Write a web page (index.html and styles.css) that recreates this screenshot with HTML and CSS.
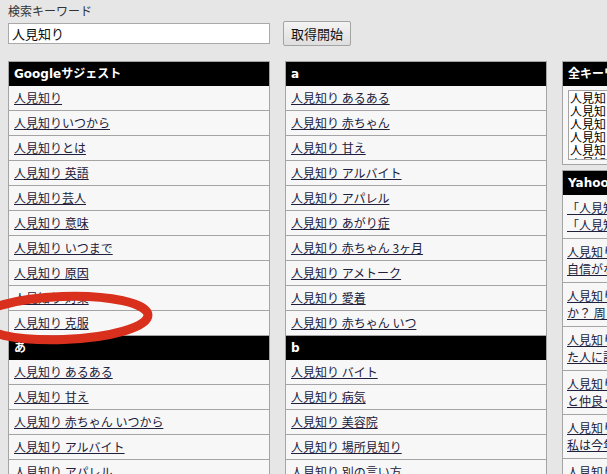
FILE: index.html
```
<!DOCTYPE html>
<html lang="ja">
  <head>
    <meta charset="UTF-8" />
    <meta name="viewport" content="width=device-width, initial-scale=1.0" />
    <title>キーワード取得</title>
    <link rel="stylesheet" href="styles.css">
  </head>
  <body>
    <div class="search">
      <div class="search-label">検索キーワード</div>
      <div class="search-row">
        <input class="search-input" type="text" value="人見知り" />
        <button class="search-btn" type="button">取得開始</button>
      </div>
    </div>

    <div class="columns">
      <div class="col">
        <div class="col-head">Googleサジェスト</div>
        <div class="col-item"><a href="#">人見知り</a></div>
        <div class="col-item"><a href="#">人見知りいつから</a></div>
        <div class="col-item"><a href="#">人見知りとは</a></div>
        <div class="col-item"><a href="#">人見知り 英語</a></div>
        <div class="col-item"><a href="#">人見知り芸人</a></div>
        <div class="col-item"><a href="#">人見知り 意味</a></div>
        <div class="col-item"><a href="#">人見知り いつまで</a></div>
        <div class="col-item"><a href="#">人見知り 原因</a></div>
        <div class="col-item"><a href="#">人見知り 対策</a></div>
        <div class="col-item"><a href="#">人見知り 克服</a></div>
        <div class="col-head">あ</div>
        <div class="col-item"><a href="#">人見知り あるある</a></div>
        <div class="col-item"><a href="#">人見知り 甘え</a></div>
        <div class="col-item"><a href="#">人見知り 赤ちゃん いつから</a></div>
        <div class="col-item"><a href="#">人見知り アルバイト</a></div>
        <div class="col-item"><a href="#">人見知り アパレル</a></div>
      </div>

      <div class="col">
        <div class="col-head">a</div>
        <div class="col-item"><a href="#">人見知り あるある</a></div>
        <div class="col-item"><a href="#">人見知り 赤ちゃん</a></div>
        <div class="col-item"><a href="#">人見知り 甘え</a></div>
        <div class="col-item"><a href="#">人見知り アルバイト</a></div>
        <div class="col-item"><a href="#">人見知り アパレル</a></div>
        <div class="col-item"><a href="#">人見知り あがり症</a></div>
        <div class="col-item"><a href="#">人見知り 赤ちゃん 3ヶ月</a></div>
        <div class="col-item"><a href="#">人見知り アメトーク</a></div>
        <div class="col-item"><a href="#">人見知り 愛着</a></div>
        <div class="col-item"><a href="#">人見知り 赤ちゃん いつ</a></div>
        <div class="col-head">b</div>
        <div class="col-item"><a href="#">人見知り バイト</a></div>
        <div class="col-item"><a href="#">人見知り 病気</a></div>
        <div class="col-item"><a href="#">人見知り 美容院</a></div>
        <div class="col-item"><a href="#">人見知り 場所見知り</a></div>
        <div class="col-item"><a href="#">人見知り 別の言い方</a></div>
      </div>

      <div class="col-side">
        <div class="box">
          <div class="col-head">全キーワード</div>
          <div class="box-body">
            <textarea class="kw-list">人見知り
人見知りいつから
人見知りとは
人見知り 英語
人見知り芸人
人見知り 意味
人見知り いつまで
人見知り 原因</textarea>
          </div>
        </div>
        <div class="box">
          <div class="col-head">Yahoo!知恵袋</div>
          <div class="col-item col-item-qa"><a href="#">「人見知り」の反対の言葉は何ですか？<br>「人見知りしない」以外で教えてください</a></div>
          <div class="col-item col-item-qa"><a href="#">人見知りを直したいです。人と話す<br>自信がなくていつも緊張してしまいます</a></div>
          <div class="col-item col-item-qa"><a href="#">人見知りは性格ですか、病気です<br>か？ 周りの目が気になります</a></div>
          <div class="col-item col-item-qa"><a href="#">人見知りを克服できた方、克服でき<br>た人に話を聞きたいです</a></div>
          <div class="col-item col-item-qa"><a href="#">人見知りなのですが、職場の人たち<br>と仲良くなる方法はありますか</a></div>
          <div class="col-item col-item-qa"><a href="#">人見知りについての質問です。<br>私は今年から大学生になります</a></div>
          <div class="col-item col-item-qa"><a href="#">人見知りの子供への接し方について<br>教えてください</a></div>
        </div>
      </div>
    </div>

    <svg class="mark" width="200" height="90" viewBox="0 0 200 90">
      <ellipse cx="63" cy="41" rx="85" ry="21.5" transform="rotate(-2 63 41)" fill="none" stroke="#d8301c" stroke-width="9" />
    </svg>
  </body>
</html>
```

FILE: styles.css
```
* {
  margin: 0;
  padding: 0;
  box-sizing: border-box;
}
body {
  background: #e6e6e6;
  padding: 0 8px;
  overflow: hidden;
  font-family: "Noto Sans CJK JP", sans-serif;
  font-size: 12px;
  color: #222;
}

/* search form */
.search-label {
  margin-top: 3px;
  height: 16px;
  line-height: 16px;
  color: #333;
}
.search-row {
  display: flex;
  align-items: center;
  margin-top: 2px;
}
.search-input {
  width: 262px;
  height: 21px;
  border: 1px solid #a9a9a9;
  background: #fff;
  padding: 0 3px;
  font-family: "Noto Sans CJK JP", sans-serif;
  font-size: 13px;
  color: #111;
}
.search-btn {
  margin-left: 13px;
  width: 68px;
  height: 25px;
  border: 1px solid #a3a3a3;
  border-radius: 2px;
  background: linear-gradient(#f4f4f4, #dedede);
  font-family: "Noto Sans CJK JP", sans-serif;
  font-size: 13px;
  color: #111;
}

/* result columns */
.columns {
  display: flex;
  gap: 15px;
  margin-top: 15px;
  align-items: flex-start;
}
.col,
.box {
  flex: none;
  width: 262px;
  border: 1px solid #a4a4a4;
  border-bottom: none;
}
.col-side {
  flex: none;
  width: 262px;
}
.box {
  border-bottom: 1px solid #a4a4a4;
}
.box + .box {
  margin-top: 5px;
}
.col-head {
  height: 24px;
  line-height: 24px;
  padding: 0 5px;
  background: #000;
  color: #fff;
  font-family: "DejaVu Sans", "Noto Sans CJK JP", sans-serif;
  font-weight: bold;
  font-size: 12px;
  overflow: hidden;
}
.col-item {
  height: 25px;
  background: #f7f7f7;
  border-bottom: 1px solid #a4a4a4;
  padding: 4px 5px;
  line-height: 16px;
  white-space: nowrap;
  overflow: hidden;
}
.box .col-item:last-child {
  border-bottom: none;
}
.col-item a {
  color: #20203c;
}
.col-item-qa {
  height: 44px;
  padding: 4px 4px 5px;
  line-height: 17px;
}

.box-body {
  background: #f7f7f7;
  padding: 4px 5px;
}
.kw-list {
  display: block;
  width: 250px;
  height: 70px;
  border: 1px solid #a4a4a4;
  background: #fff;
  padding: 2px 1px;
  resize: none;
  font-family: "Liberation Serif", "Noto Sans CJK JP", serif;
  font-size: 12px;
  line-height: 13px;
  color: #000;
}

/* red hand-drawn circle over the google column */
.mark {
  position: absolute;
  left: 0;
  top: 277px;
  pointer-events: none;
}
```
